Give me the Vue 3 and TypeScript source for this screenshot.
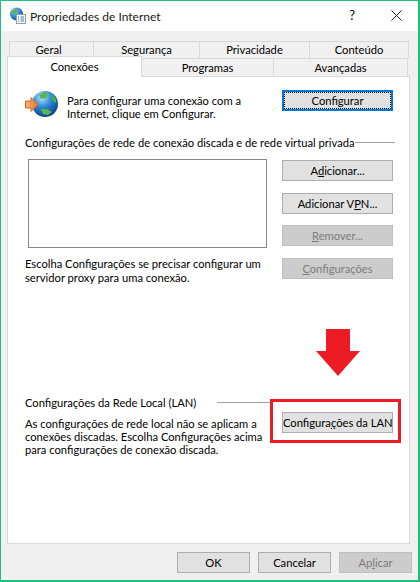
<script setup lang="ts">
interface Tab {
  title: string,
  width: number,
  selected?: boolean,
}

const backTabs: Array<Tab> = [
  { title: 'Geral', width: 85 },
  { title: 'Segurança', width: 107 },
  { title: 'Privacidade', width: 111 },
  { title: 'Conteúdo', width: 100 },
];

const frontTabs: Array<Tab> = [
  { title: 'Conexões', width: 135, selected: true },
  { title: 'Programas', width: 133 },
  { title: 'Avançadas', width: 135 },
];
</script>

<template>
  <div class="window">
    <header class="titlebar">
      <svg class="title-icon" width="18" height="18" viewBox="0 0 18 18">
        <defs>
          <radialGradient id="tg" cx="35%" cy="30%" r="75%">
            <stop offset="0" stop-color="#8fd4f5" />
            <stop offset="0.6" stop-color="#2a7fc9" />
            <stop offset="1" stop-color="#134f93" />
          </radialGradient>
        </defs>
        <circle cx="7.5" cy="7" r="6.5" fill="url(#tg)" />
        <path d="M3 4 L7 2 L9 4 L6 7 L3 7 Z M8 9 L11 9 L10 13 L8 12 Z" fill="#5fb04a" />
        <rect x="7.5" y="7.5" width="9" height="9" fill="#f4f7fb" stroke="#8e9fb5" />
        <path d="M9 10 H10 M11.5 10 H15 M9 12 H10 M11.5 12 H15 M9 14 H10 M11.5 14 H15" stroke="#5d7ea6" />
      </svg>
      <span class="title-text">Propriedades de Internet</span>
      <span class="help">?</span>
      <svg class="close" width="11" height="11" viewBox="0 0 11 11">
        <path d="M0.5 0.5 L10.5 10.5 M10.5 0.5 L0.5 10.5" stroke="#222" stroke-width="1" fill="none" />
      </svg>
    </header>

    <div class="body">
      <div class="tabs-back">
        <div v-for="tab in backTabs" :key="tab.title" class="tab" :style="{ width: tab.width + 'px' }">{{ tab.title }}</div>
      </div>
      <div class="tabs-front">
        <div
          v-for="tab in frontTabs"
          :key="tab.title"
          class="tab"
          :class="{ selected: tab.selected }"
          :style="{ width: tab.width + 'px' }"
        >{{ tab.title }}</div>
      </div>

      <main class="panel">
        <section class="intro">
          <svg class="globe" width="33" height="28" viewBox="0 0 33 28">
            <defs>
              <radialGradient id="gg" cx="38%" cy="25%" r="80%">
                <stop offset="0" stop-color="#b5e8fa" />
                <stop offset="0.45" stop-color="#2c8ad6" />
                <stop offset="1" stop-color="#0d3b82" />
              </radialGradient>
              <linearGradient id="ga" x1="0" y1="0" x2="1" y2="0">
                <stop offset="0" stop-color="#f9b27a" />
                <stop offset="1" stop-color="#ee7426" />
              </linearGradient>
            </defs>
            <circle cx="20" cy="14" r="13" fill="url(#gg)" />
            <path d="M14 5 L20 2 L23 4 L21 8 L16 9 Z" fill="#5cb64f" />
            <path d="M26 4 L31 9 L31 13 L27 10 Z" fill="#4fae48" />
            <path d="M16 19 L22 19 L27 22 L23 25 L18 24 Z" fill="#58b84f" />
            <path d="M0.5 11 H6 V7.5 L13 14.5 L6 21.5 V18 H0.5 Z" fill="url(#ga)" stroke="#cf6a22" stroke-width="1" />
          </svg>
          <p class="intro-text">Para configurar uma conexão com a<br />Internet, clique em Configurar.</p>
          <button class="btn default"><span class="focus">Configurar</span></button>
        </section>

        <div class="group-title first">
          <span>Configurações de rede de conexão discada e de rede virtual privada</span>
          <i class="rule"></i>
        </div>

        <section class="connections">
          <div class="left-col">
            <div class="listbox"></div>
            <p class="proxy-text">Escolha Configurações se precisar configurar um<br />servidor proxy para uma conexão.</p>
          </div>
          <div class="right-col">
            <button class="btn">A<u>d</u>icionar...</button>
            <button class="btn wide-gap">Adicionar V<u>P</u>N...</button>
            <button class="btn off"><u>R</u>emover...</button>
            <button class="btn off wide-gap"><u>C</u>onfigurações</button>
          </div>
        </section>

        <section class="lan">
          <div class="lan-left">
            <div class="group-title">
              <span>Configurações da Rede Local (LAN)</span>
              <i class="rule short"></i>
            </div>
            <p class="lan-text">As configurações de rede local não se aplicam a<br />conexões discadas. Escolha Configurações acima<br />para configurações de conexão discada.</p>
          </div>
          <button class="btn lan-btn">Configura<u>ç</u>ões da LAN</button>
        </section>

        <svg class="arrow" width="44" height="48" viewBox="0 0 44 48">
          <path d="M10 0 H34 V22 H44 L22 47 L0 22 H10 Z" fill="#ed1c24" />
        </svg>
        <div class="highlight"></div>
      </main>

      <footer class="actions">
        <button class="btn">OK</button>
        <button class="btn">Cancelar</button>
        <button class="btn off">Ap<u>l</u>icar</button>
      </footer>
    </div>
  </div>
</template>

<style scoped>
.window {
  box-sizing: border-box;
  width: 420px;
  height: 582px;
  display: flex;
  flex-direction: column;
  border-top: 1px solid #1cc27c;
  border-left: 1px solid #1cc27c;
  border-right: 2px solid #1cc27c;
  border-bottom: 2px solid #1cc27c;
  background: #f0f0f0;
  font-family: Lato, "Noto Sans", sans-serif;
  font-size: 11.2px;
  color: #000;
  overflow: hidden;
}

.titlebar {
  height: 30px;
  flex: none;
  background: #fff;
  display: flex;
  align-items: center;
  padding-left: 8px;
}

.title-icon {
  margin-right: 3px;
}

.title-text {
  font-size: 12px;
  flex: 1;
  color: #1a1a1a;
}

.help {
  font-size: 13px;
  margin-right: 36px;
  margin-top: -2px;
}

.close {
  margin-right: 16px;
  margin-top: -1px;
}

.body {
  flex: 1;
  display: flex;
  flex-direction: column;
  padding: 10px 0 0 6px;
}

.tabs-back {
  display: flex;
  height: 17px;
  margin-left: 3px;
}

.tabs-back .tab {
  padding-bottom: 1px;
}

.tabs-back .tab:first-child {
  padding-right: 6px;
}

.tabs-front {
  display: flex;
  height: 19px;
  position: relative;
  z-index: 1;
}

.tab {
  box-sizing: border-box;
  flex: none;
  display: flex;
  align-items: center;
  justify-content: center;
  border: 1px solid #d9d9d9;
  border-bottom: none;
  margin-left: -1px;
  background: #f0f0f0;
}

.tabs-front .tab:first-child {
  margin-left: 0;
}

.tabs-front .tab {
  border-bottom: 1px solid #d9d9d9;
}

.tabs-front .tab.selected {
  background: #fff;
  height: 21px;
  margin-top: -2px;
  padding-bottom: 2px;
  border-bottom: none;
}

.panel {
  position: relative;
  box-sizing: border-box;
  width: 403px;
  height: 468px;
  flex: none;
  background: #fff;
  border: 1px solid #d9d9d9;
  margin-top: -1px;
  padding: 14px 16px 0 17px;
}

.intro {
  display: flex;
  align-items: flex-start;
}

.globe {
  flex: none;
  margin: -1px 9px 0 0;
}

.intro-text {
  margin: 3px 0 0;
  line-height: 13px;
  flex: 1;
  white-space: nowrap;
}

.btn {
  box-sizing: border-box;
  flex: none;
  width: 111px;
  height: 21px;
  padding: 0;
  border: 1px solid #adadad;
  background: #e1e1e1;
  font: inherit;
  color: #000;
  white-space: nowrap;
}

.btn u {
  text-underline-offset: 1px;
}

.btn.off {
  background: #cccccc;
  border-color: #bfbfbf;
  color: #7d7d7d;
}

.btn.default {
  border: 2px solid #0078d7;
  margin-top: -1px;
}

.focus {
  display: block;
  height: 15px;
  line-height: 15px;
  border: 1px dotted #000;
}

.group-title {
  display: flex;
  align-items: center;
  justify-content: space-between;
  white-space: nowrap;
}

.group-title.first {
  margin-top: 15px;
  height: 14px;
}

.rule {
  flex: none;
  width: 40px;
  height: 1px;
  background: #a0a0a0;
}

.rule.short {
  width: 53px;
}

.connections {
  display: flex;
  justify-content: space-between;
  margin-top: 10px;
}

.left-col {
  width: 239px;
  margin-left: 3px;
}

.listbox {
  box-sizing: border-box;
  height: 89px;
  border: 1px solid #828790;
  background: #fff;
}

.proxy-text {
  margin: 9px 0 0 -3px;
  line-height: 14px;
  white-space: nowrap;
}

.right-col {
  display: flex;
  flex-direction: column;
  gap: 11px;
  margin-top: 1px;
}

.right-col .wide-gap {
  margin-top: 1px;
}

.lan {
  display: flex;
  justify-content: space-between;
  margin-top: 111px;
}

.lan-left {
  width: 245px;
}

.lan-text {
  margin: 8px 0 0;
  line-height: 13px;
  white-space: nowrap;
}

.lan-btn {
  margin-top: 16px;
}

.arrow {
  position: absolute;
  left: 308px;
  top: 252px;
}

.highlight {
  position: absolute;
  left: 262px;
  top: 322px;
  width: 131px;
  height: 44px;
  box-sizing: border-box;
  border: 3px solid #ed1c24;
}

.actions {
  display: flex;
  justify-content: flex-end;
  gap: 8px;
  padding: 8px 0 0 0;
  margin-right: 6px;
}

.actions .btn {
  width: 73px;
}
</style>

<style>
html, body {
  margin: 0;
  background: #fff;
}
</style>
